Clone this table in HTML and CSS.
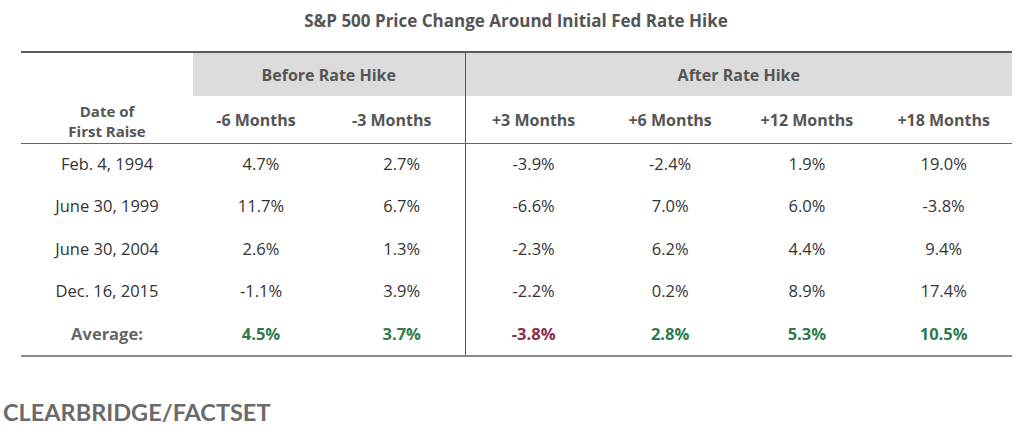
FILE: index.html
```html
<!DOCTYPE html>
<html>
<head>
<meta charset="utf-8">
<link rel="stylesheet" href="styles.css">
</head>
<body>
<div class="page">
  <h1 class="title">S&amp;P 500 Price Change Around Initial Fed Rate Hike</h1>
  <table class="data">
    <colgroup>
      <col class="c-date">
      <col class="c-num"><col class="c-num">
      <col class="c-num2"><col class="c-num2"><col class="c-num2"><col class="c-num2">
    </colgroup>
    <thead>
      <tr class="group-row">
        <th class="blank"></th>
        <th colspan="2" class="group">Before Rate Hike</th>
        <th colspan="4" class="group divider">After Rate Hike</th>
      </tr>
      <tr class="label-row">
        <th class="date-head">Date of<br>First Raise</th>
        <th class="before-head">-6 Months</th>
        <th class="before-head">-3 Months</th>
        <th class="divider">+3 Months</th>
        <th>+6 Months</th>
        <th>+12 Months</th>
        <th>+18 Months</th>
      </tr>
    </thead>
    <tbody>
      <tr><td>Feb. 4, 1994</td><td>4.7%</td><td class="col3">2.7%</td><td class="divider">-3.9%</td><td>-2.4%</td><td>1.9%</td><td>19.0%</td></tr>
      <tr><td>June 30, 1999</td><td>11.7%</td><td class="col3">6.7%</td><td class="divider">-6.6%</td><td>7.0%</td><td>6.0%</td><td>-3.8%</td></tr>
      <tr><td>June 30, 2004</td><td>2.6%</td><td class="col3">1.3%</td><td class="divider">-2.3%</td><td>6.2%</td><td>4.4%</td><td>9.4%</td></tr>
      <tr><td>Dec. 16, 2015</td><td>-1.1%</td><td class="col3">3.9%</td><td class="divider">-2.2%</td><td>0.2%</td><td>8.9%</td><td>17.4%</td></tr>
      <tr class="avg-row"><td class="avg-label">Average:</td><td class="pos">4.5%</td><td class="pos col3">3.7%</td><td class="divider neg">-3.8%</td><td class="pos">2.8%</td><td class="pos">5.3%</td><td class="pos">10.5%</td></tr>
    </tbody>
  </table>
  <div class="source">CLEARBRIDGE/FACTSET</div>
</div>
</body>
</html>
```
FILE: styles.css
```css
html, body {
  margin: 0;
  padding: 0;
  background: #ffffff;
}

.page {
  width: 1024px;
  height: 435px;
  overflow: hidden;
  font-family: "Open Sans", "Noto Sans", sans-serif;
}

.title {
  margin: 0;
  padding: 9px 0 0 8px;
  height: 51px;
  box-sizing: border-box;
  text-align: center;
  font-size: 17px;
  line-height: 24px;
  font-weight: 700;
  color: #555555;
}

.data {
  margin-left: 21px;
  width: 991px;
  border-collapse: collapse;
  table-layout: fixed;
  border-top: 2px solid #5a5a5a;
  border-bottom: 2px solid #8a8a8a;
}

.c-date { width: 172px; }
.c-num { width: 136px; }
.c-num2 { width: 136.75px; }

.data th,
.data td {
  padding: 0;
  text-align: center;
}

.group-row th {
  height: 43px;
  font-size: 16px;
  font-weight: 700;
  color: #555555;
}

.group-row .group {
  background: #dcdcdc;
}

.label-row th {
  height: 44px;
  font-size: 16px;
  font-weight: 700;
  color: #555555;
  border-bottom: 1.5px solid #666666;
}

.label-row .before-head {
  padding-right: 10px;
}

.label-row .date-head {
  font-size: 15px;
  line-height: 20px;
  padding-top: 3px;
}

.data td {
  height: 42px;
  font-size: 16.5px;
  color: #333333;
}

.data td.col3 {
  padding-left: 10px;
}

.data tbody tr:nth-child(1) td { height: 39px; }
.data tbody tr:nth-child(2) td { height: 44px; }
.data tbody tr:nth-child(3) td { height: 42px; }
.data tbody tr:nth-child(4) td { height: 42px; }

.divider {
  border-left: 1.5px solid #555555;
}

.avg-row td {
  font-weight: 700;
}

.data .avg-row td {
  height: 44px;
}

.avg-row .avg-label {
  color: #666666;
}

.avg-row .pos {
  color: #2e7a4c;
}

.avg-row .neg {
  color: #8a2c4c;
}

.source {
  margin-top: 43px;
  padding-left: 3px;
  font-family: Lato, "Open Sans", sans-serif;
  font-weight: 700;
  font-size: 23.5px;
  color: #6a6a6a;
  line-height: 24px;
}
```
